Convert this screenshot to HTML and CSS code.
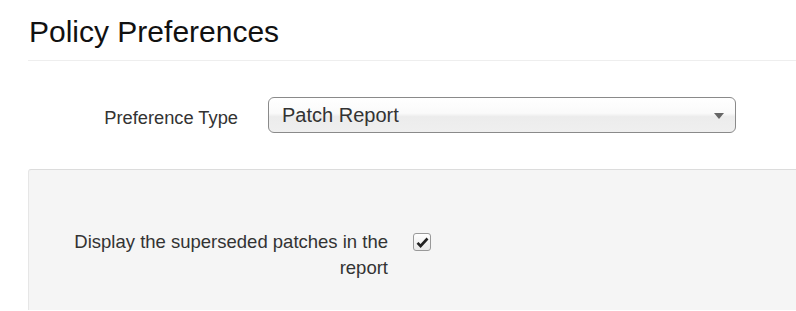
FILE: index.html
```html
<!DOCTYPE html>
<html>
<head>
    <title>Policy Preferences</title>
    <link rel="stylesheet" href="styles.css">
</head>
<body>

<div class="page">
    <h1 class="title">Policy Preferences</h1>

    <div class="pref-row">
        <label class="pref-label" for="prefType">Preference Type</label>
        <div class="select">
            <span class="select-value" id="prefType">Patch Report</span>
            <span class="select-arrow"></span>
        </div>
    </div>

    <div class="panel">
        <div class="panel-row">
            <label class="panel-label">Display the superseded patches in the report</label>
            <span class="checkbox">
                <svg width="13" height="11" viewBox="0 0 13 11">
                    <path d="M1.5 5.8 L4.6 9 L11.5 1.5" fill="none" stroke="#222" stroke-width="2.6"/>
                </svg>
            </span>
        </div>
    </div>
</div>

</body>
</html>
```

FILE: styles.css
```css
body {
    margin: 0;
    font-family: "Liberation Sans", Arial, sans-serif;
    background-color: #fff;
    overflow: hidden;
}

.page {
    padding-left: 28px;
}

.title {
    margin: 0;
    padding: 17px 0 13px 1px;
    font-size: 30px;
    font-weight: normal;
    line-height: 30px;
    color: #111;
    border-bottom: 1px solid #eee;
}

.pref-row {
    display: flex;
    align-items: center;
    margin-top: 36px;
}

.pref-label {
    width: 210px;
    text-align: right;
    font-size: 18.3px;
    color: #333;
    padding-top: 5px;
}

.select {
    position: relative;
    margin-left: 30px;
    width: 466px;
    height: 34px;
    border: 1px solid #8a8a8a;
    border-radius: 6px;
    background: linear-gradient(#fff 0%, #fafafa 45%, #ececec 55%, #efefef 100%);
    display: flex;
    align-items: center;
}

.select-value {
    padding-left: 13px;
    font-size: 20px;
    color: #333;
}

.select-arrow {
    position: absolute;
    right: 11px;
    top: 15px;
    width: 0;
    height: 0;
    border-left: 5px solid transparent;
    border-right: 5px solid transparent;
    border-top: 6px solid #666;
}

.panel {
    margin-top: 36px;
    height: 140px;
    background-color: #f5f5f5;
    border-top: 1px solid #dcdcdc;
    border-left: 1px solid #e6e6e6;
    border-top-left-radius: 3px;
}

.panel-row {
    display: flex;
    align-items: flex-start;
    padding-top: 59px;
}

.panel-label {
    box-sizing: border-box;
    width: 359px;
    padding-left: 36px;
    text-align: right;
    font-size: 18.5px;
    line-height: 26px;
    color: #333;
}

.checkbox {
    margin-left: 25px;
    margin-top: 4px;
    width: 16px;
    height: 16px;
    border: 1px solid #999;
    border-radius: 3px;
    background: linear-gradient(#fff, #e8e8e8);
    display: flex;
    align-items: center;
    justify-content: center;
}
```
